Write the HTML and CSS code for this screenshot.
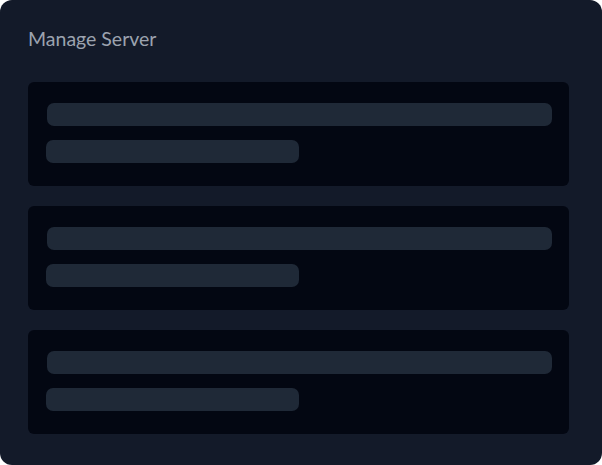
FILE: index.html
```html
<!DOCTYPE html>
<html>
<head>
<meta charset="utf-8">
<link rel="stylesheet" href="styles.css">
</head>
<body>
<div class="panel">
  <h1 class="title">Manage Server</h1>
  <div class="list">
    <div class="card"><div class="bar bar-long"></div><div class="bar bar-short"></div></div>
    <div class="card"><div class="bar bar-long"></div><div class="bar bar-short"></div></div>
    <div class="card"><div class="bar bar-long"></div><div class="bar bar-short"></div></div>
  </div>
</div>
</body>
</html>
```
FILE: styles.css
```css
html, body { margin: 0; padding: 0; background: #ffffff; }
.panel {
  width: 602px;
  height: 465px;
  box-sizing: border-box;
  background: #131a29;
  border-radius: 12px;
  padding: 26px 33px 0 28px;
}
.title {
  margin: 0;
  font-family: Lato, "Open Sans", sans-serif;
  font-weight: 400;
  font-size: 19.5px;
  line-height: 26px;
  color: #9ca3af;
}
.list {
  margin-top: 30px;
  display: flex;
  flex-direction: column;
  gap: 20px;
}
.card {
  height: 104px;
  box-sizing: border-box;
  background: #030712;
  border-radius: 6px;
  padding: 21px 17px 0 18px;
  display: flex;
  flex-direction: column;
  gap: 14px;
}
.bar {
  height: 23px;
  background: #1f2937;
  border-radius: 7px;
}
.bar-long { margin-left: 1px; }
.bar-short { width: 253px; }
```
